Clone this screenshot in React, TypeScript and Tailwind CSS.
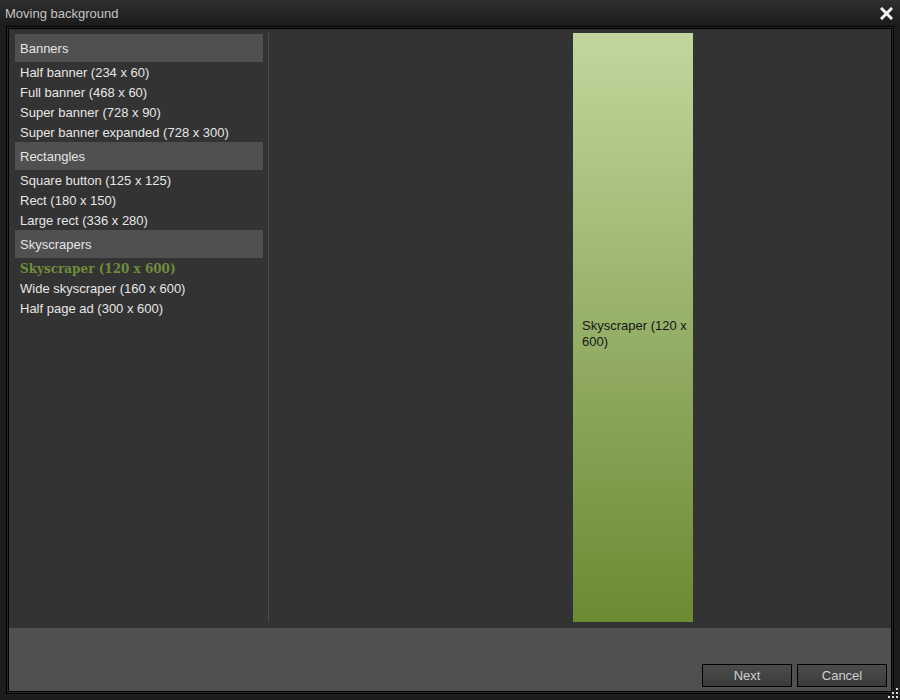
import { useState } from "react";

type Group = { title: string; items: string[] };

const groups: Group[] = [
  {
    title: "Banners",
    items: [
      "Half banner (234 x 60)",
      "Full banner (468 x 60)",
      "Super banner (728 x 90)",
      "Super banner expanded (728 x 300)",
    ],
  },
  {
    title: "Rectangles",
    items: ["Square button (125 x 125)", "Rect (180 x 150)", "Large rect (336 x 280)"],
  },
  {
    title: "Skyscrapers",
    items: ["Skyscraper (120 x 600)", "Wide skyscraper (160 x 600)", "Half page ad (300 x 600)"],
  },
];

function ResizeGrip() {
  const dots = [
    [8, 0],
    [4, 4],
    [8, 4],
    [0, 8],
    [4, 8],
    [8, 8],
  ];
  return (
    <svg width="11" height="11" viewBox="0 0 11 11" className="absolute right-[1px] bottom-[1px]">
      {dots.map(([x, y]) => (
        <rect key={`${x}-${y}`} x={x} y={y} width="2" height="2" fill="#d8d8d8" />
      ))}
    </svg>
  );
}

export default function App() {
  const [selected, setSelected] = useState("Skyscraper (120 x 600)");

  return (
    <div
      className="relative flex h-[700px] w-[900px] flex-col bg-[#1d1d1d] text-[13px]"
      style={{ fontFamily: '"Liberation Sans", Arial, sans-serif' }}
    >
      <div className="flex h-[26px] shrink-0 items-center justify-between bg-gradient-to-b from-[#2f2f2f] to-[#1b1b1b] pl-[5px] pr-[7px]">
        <span className="pt-px text-[13px] text-[#c4c4c4]">Moving background</span>
        <svg width="13" height="13" viewBox="0 0 13 13">
          <path d="M2 2 L11 11 M11 2 L2 11" stroke="#f2f2f2" strokeWidth="3" strokeLinecap="square" />
        </svg>
      </div>

      <div className="mx-[6px] mb-[6px] flex flex-1 flex-col border border-black bg-[#262626] p-px">
        <div className="flex flex-1 flex-col border border-black">
          <div className="flex h-[599px] bg-[#333333]">
            <div className="flex w-[259px] shrink-0 flex-col pl-[6px] pt-[5px]">
              {groups.map((g) => (
                <div key={g.title} className="w-[248px]">
                  <div className="flex h-[28px] items-center bg-[#505050] pl-[5px] pt-px text-[#e4e4e4]">
                    {g.title}
                  </div>
                  {g.items.map((it) =>
                    it === selected ? (
                      <div
                        key={it}
                        onClick={() => setSelected(it)}
                        className="flex h-[20px] items-center pl-[5px] pt-px text-[12px] font-bold text-[#6f8c3c]"
                        style={{ fontFamily: '"DejaVu Serif", "Liberation Serif", serif' }}
                      >
                        {it}
                      </div>
                    ) : (
                      <div
                        key={it}
                        onClick={() => setSelected(it)}
                        className="flex h-[20px] cursor-default items-center pl-[5px] pt-px text-[#e6e6e6]"
                      >
                        {it}
                      </div>
                    )
                  )}
                </div>
              ))}
            </div>
            <div className="mt-[4px] mb-[6px] w-px bg-[#4c4c4c]" />
            <div className="flex flex-1 pt-[4px] pb-[6px] pl-[304px]">
              <div className="flex w-[120px] items-center bg-gradient-to-b from-[#c1d79d] to-[#6c8a30] pl-[9px] pr-[2px] pt-[12px] text-[#161616]">
                <span className="leading-[16px]">{selected}</span>
              </div>
            </div>
          </div>
          <div className="flex flex-1 items-end justify-end gap-[5px] bg-[#505050] pr-[4px] pb-[4px]">
            <button className="flex h-[23px] w-[90px] items-center justify-center border border-black bg-gradient-to-b from-[#4c4c4c] to-[#3b3b3b] text-[13px] text-[#cfcfcf]">
              Next
            </button>
            <button className="flex h-[23px] w-[90px] items-center justify-center border border-black bg-gradient-to-b from-[#4c4c4c] to-[#3b3b3b] text-[13px] text-[#cfcfcf]">
              Cancel
            </button>
          </div>
        </div>
      </div>
      <ResizeGrip />
    </div>
  );
}
